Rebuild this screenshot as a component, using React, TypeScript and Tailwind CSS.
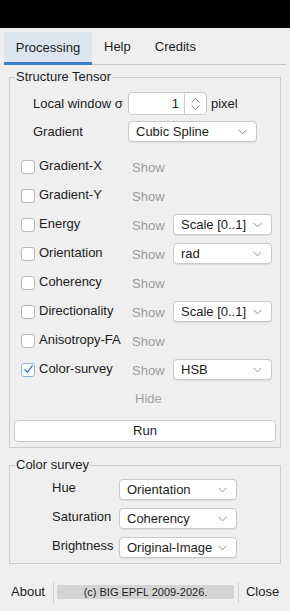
import React from "react";

const font = { fontFamily: '"Liberation Sans", Arial, Helvetica, sans-serif' };

function Chevron() {
  return (
    <svg width="9" height="6" viewBox="0 0 9 6" className="shrink-0">
      <path d="M0.5 0.8 L4.5 4.8 L8.5 0.8" fill="none" stroke="#8a8a8a" strokeWidth="1" />
    </svg>
  );
}

function Combo({ value, width }: { value: string; width: string }) {
  return (
    <div
      className={`${width} h-[21px] flex items-center justify-between pl-[7px] pr-[9px] bg-white border border-[#c9c9c9] rounded-[4px] shadow-[0_0.5px_1px_rgba(0,0,0,0.08)]`}
    >
      <span className="text-[13px] text-[#1c1c1c] leading-none">{value}</span>
      <Chevron />
    </div>
  );
}

function Checkbox({ checked }: { checked?: boolean }) {
  return (
    <div
      className={`w-[14px] h-[14px] shrink-0 rounded-[3px] bg-white border flex items-center justify-center ${
        checked ? "border-[#8fb3e6]" : "border-[#b8b8b8]"
      }`}
    >
      {checked && (
        <svg width="11" height="11" viewBox="0 0 11 11">
          <path d="M2 5.8 L4.4 8.4 L9.2 1.8" fill="none" stroke="#2f7de1" strokeWidth="1.4" strokeLinecap="round" strokeLinejoin="round" />
        </svg>
      )}
    </div>
  );
}

const rows: { label: string; combo?: string; checked?: boolean }[] = [
  { label: "Gradient-X" },
  { label: "Gradient-Y" },
  { label: "Energy", combo: "Scale [0..1]" },
  { label: "Orientation", combo: "rad" },
  { label: "Coherency" },
  { label: "Directionality", combo: "Scale [0..1]" },
  { label: "Anisotropy-FA" },
  { label: "Color-survey", combo: "HSB", checked: true },
];

const survey = [
  { label: "Hue", value: "Orientation" },
  { label: "Saturation", value: "Coherency" },
  { label: "Brightness", value: "Original-Image" },
];

export default function App() {
  return (
    <div style={font} className="w-[290px] h-[611px] bg-[#efefef] text-[13px] text-[#1c1c1c] overflow-hidden">
      <div className="h-[28px] bg-black" />

      {/* tabs */}
      <div className="mt-[4px] flex items-stretch h-[33px] pl-[4px] pr-[4px]">
        <div className="w-[88px] bg-[#dde4ec] border-b-[3px] border-[#3c7fc6] flex items-center justify-center pt-[1px]">
          Processing
        </div>
        <div className="flex-1 flex items-center border-b border-[#c8c8c8] pb-[2px]">
          <span className="ml-[12px]">Help</span>
          <span className="ml-[24px]">Credits</span>
        </div>
      </div>

      {/* Structure Tensor */}
      <fieldset className="mt-[4px] mx-[9px] border border-[#cdcdcd] pb-[5px]">
        <legend className="ml-[5px] px-[1px] leading-[16px]">Structure Tensor</legend>

        <div className="mt-[7px] h-[23px] flex items-center pl-[23px]">
          <span className="w-[95px]">Local window σ</span>
          <div className="w-[79px] h-[23px] flex bg-white border border-[#c9c9c9] rounded-[4px]">
            <div className="flex-1 flex items-center justify-end pr-[5px]">1</div>
            <div className="w-[22px] border-l border-[#d2d2d2] flex flex-col items-center justify-center gap-[2px]">
              <svg width="9" height="5" viewBox="0 0 9 5">
                <path d="M0.5 4.5 L4.5 0.7 L8.5 4.5" fill="none" stroke="#8a8a8a" strokeWidth="1" />
              </svg>
              <svg width="9" height="5" viewBox="0 0 9 5">
                <path d="M0.5 0.5 L4.5 4.3 L8.5 0.5" fill="none" stroke="#8a8a8a" strokeWidth="1" />
              </svg>
            </div>
          </div>
          <span className="ml-[4px]">pixel</span>
        </div>

        <div className="mt-[6px] h-[21px] flex items-center pl-[23px]">
          <span className="w-[95px]">Gradient</span>
          <Combo value="Cubic Spline" width="w-[129px]" />
        </div>

        <div className="mt-[10px]">
          {rows.map((r) => (
            <div key={r.label} className="h-[29px] flex items-center pl-[11px]">
              <Checkbox checked={r.checked} />
              <span className="ml-[4px] w-[93px] -mt-[1px]">{r.label}</span>
              <span className="w-[41px] text-[#9b9b9b] mt-[2px]">Show</span>
              {r.combo && <Combo value={r.combo} width="w-[99px]" />}
            </div>
          ))}
          <div className="h-[29px] flex items-center pl-[125px] text-[#a3a3a3]">Hide</div>
        </div>

        <button className="mt-[7px] mx-[4px] w-[262px] h-[22px] bg-white border border-[#c9c9c9] rounded-[4px] flex items-center justify-center text-[13px] text-[#1c1c1c]">
          Run
        </button>
      </fieldset>

      {/* Color survey */}
      <fieldset className="mt-[9px] mx-[9px] border border-[#cdcdcd] pb-[5px]">
        <legend className="ml-[5px] px-[1px] leading-[16px]">Color survey</legend>
        <div className="mt-[6px] flex flex-col gap-[8px]">
          {survey.map((s) => (
            <div key={s.label} className="h-[21px] flex items-center pl-[42px]">
              <span className="w-[67px] -mt-[3px]">{s.label}</span>
              <Combo value={s.value} width="w-[118px]" />
            </div>
          ))}
        </div>
      </fieldset>

      {/* footer */}
      <div className="mt-[17px] h-[22px] flex items-center pl-[11px]">
        <span>About</span>
        <div className="ml-[8px] w-px h-[21px] bg-[#cfcfcf]" />
        <div className="ml-[3px] w-[177px] h-[14px] bg-[#d4d4d4] rounded-[2px] flex items-center justify-center text-[11px] text-[#1c1c1c]">
          (c) BIG EPFL 2009-2026.
        </div>
        <div className="ml-[4px] w-px h-[21px] bg-[#cfcfcf]" />
        <span className="ml-[7px]">Close</span>
      </div>
    </div>
  );
}
